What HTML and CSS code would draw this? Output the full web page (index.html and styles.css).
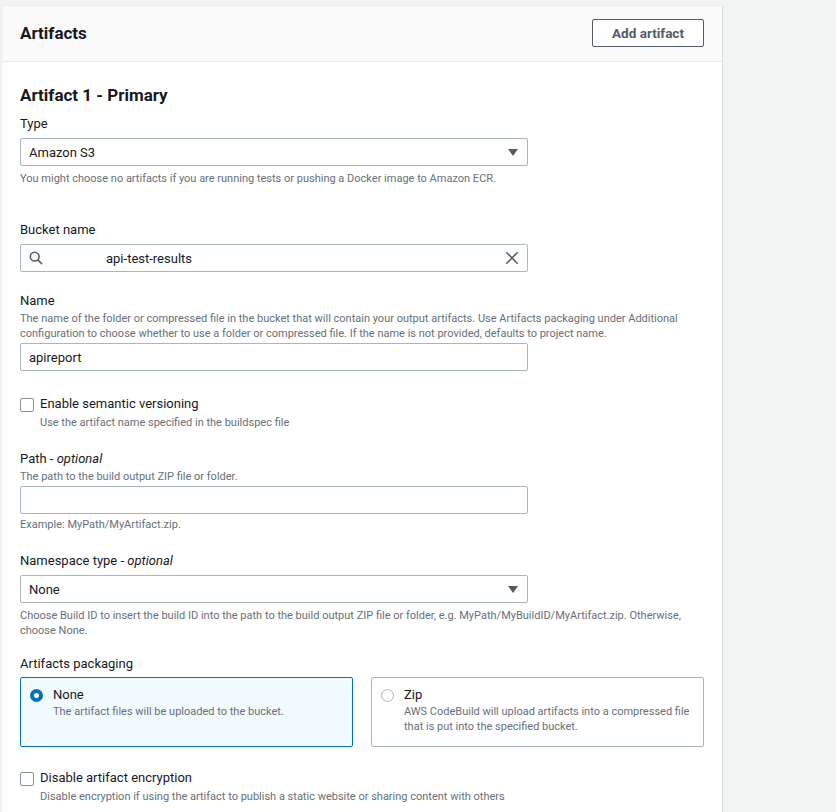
FILE: index.html
```html
<!DOCTYPE html>
<html lang="en">
<head>
  <meta charset="UTF-8" />
  <title>Artifacts</title>
  <link rel="stylesheet" href="styles.css">
</head>
<body>

  <div class="panel">
    <div class="panel-header">
      <h2>Artifacts</h2>
      <button class="btn">Add artifact</button>
    </div>

    <div class="panel-body">
      <h3>Artifact 1 - Primary</h3>

      <div class="field field-type">
        <div class="label">Type</div>
        <div class="control select">
          <span>Amazon S3</span>
          <span class="caret"></span>
        </div>
        <div class="hint">You might choose no artifacts if you are running tests or pushing a Docker image to Amazon ECR.</div>
      </div>

      <div class="field">
        <div class="label">Bucket name</div>
        <div class="control search">
          <svg class="icon" width="14" height="14" viewBox="0 0 16 16">
            <circle cx="6.5" cy="6.5" r="5" fill="none" stroke="#545b64" stroke-width="1.8"/>
            <line x1="10.2" y1="10.2" x2="14.5" y2="14.5" stroke="#545b64" stroke-width="1.8" stroke-linecap="round"/>
          </svg>
          <span class="masked"></span>
          <span class="value">api-test-results</span>
          <svg class="clear" width="14" height="14" viewBox="0 0 16 16">
            <path d="M2 2 L14 14 M14 2 L2 14" stroke="#545b64" stroke-width="1.8" stroke-linecap="round"/>
          </svg>
        </div>
      </div>

      <div class="field">
        <div class="label">Name</div>
        <div class="desc">The name of the folder or compressed file in the bucket that will contain your output artifacts. Use Artifacts packaging under Additional configuration to choose whether to use a folder or compressed file. If the name is not provided, defaults to project name.</div>
        <div class="control"><span>apireport</span></div>
      </div>

      <div class="field check">
        <span class="box"></span>
        <div>
          <div class="check-label">Enable semantic versioning</div>
          <div class="desc">Use the artifact name specified in the buildspec file</div>
        </div>
      </div>

      <div class="field field-path">
        <div class="label">Path - <i>optional</i></div>
        <div class="desc">The path to the build output ZIP file or folder.</div>
        <div class="control"></div>
        <div class="hint">Example: MyPath/MyArtifact.zip.</div>
      </div>

      <div class="field">
        <div class="label">Namespace type - <i>optional</i></div>
        <div class="control select">
          <span>None</span>
          <span class="caret"></span>
        </div>
        <div class="hint">Choose Build ID to insert the build ID into the path to the build output ZIP file or folder, e.g. MyPath/MyBuildID/MyArtifact.zip. Otherwise, choose None.</div>
      </div>

      <div class="field field-packaging">
        <div class="label">Artifacts packaging</div>
        <div class="tiles">
          <div class="tile selected">
            <span class="radio"></span>
            <div>
              <div class="tile-title">None</div>
              <div class="desc">The artifact files will be uploaded to the bucket.</div>
            </div>
          </div>
          <div class="tile">
            <span class="radio"></span>
            <div>
              <div class="tile-title">Zip</div>
              <div class="desc">AWS CodeBuild will upload artifacts into a compressed file that is put into the specified bucket.</div>
            </div>
          </div>
        </div>
      </div>

      <div class="field check check-last">
        <span class="box"></span>
        <div>
          <div class="check-label">Disable artifact encryption</div>
          <div class="desc">Disable encryption if using the artifact to publish a static website or sharing content with others</div>
        </div>
      </div>
    </div>
  </div>

</body>
</html>
```

FILE: styles.css
```css
body {
  margin: 0;
  padding: 5px 0 0 1px;
  background: #f2f3f3;
  font-family: Roboto, "Liberation Sans", sans-serif;
  color: #16191f;
  overflow: hidden;
}

.panel {
  width: 722px;
  box-sizing: border-box;
  background: #fff;
  border: 1px solid #eaeded;
  border-right-color: #d5dbdb;
  min-height: 900px;
}

.panel-header {
  display: flex;
  align-items: center;
  justify-content: space-between;
  padding: 13px 18px 14px 18px;
  background: #fafafa;
  border-bottom: 1px solid #eaeded;
}

.panel-header h2 {
  margin: 0;
  font-size: 17px;
  font-weight: 700;
}

.btn {
  width: 112px;
  height: 28px;
  background: #fff;
  border: 1px solid #545b64;
  border-radius: 2px;
  color: #545b64;
  font-family: inherit;
  font-size: 13.5px;
  font-weight: 700;
}

.panel-body {
  padding: 22px 18px 0 18px;
}

h3 {
  margin: 0;
  font-size: 17px;
  line-height: 22px;
  font-weight: 700;
}

.field {
  margin-top: 20px;
}

.field-type {
  margin-top: 9px;
  margin-bottom: 35px;
}

.field-type + .field {
  margin-top: 0;
}

.label {
  font-size: 13px;
  line-height: 18px;
}

.label i {
  font-style: italic;
}

.desc, .hint {
  font-size: 11px;
  line-height: 15px;
  color: #687078;
}

.label + .desc {
  margin-top: 1px;
}

.hint {
  margin-top: 5px;
}

.field-path .hint {
  margin-top: 3px;
}

.control {
  margin-top: 5px;
  width: 508px;
  height: 28px;
  box-sizing: border-box;
  border: 1px solid #aab7b8;
  border-radius: 2px;
  display: flex;
  align-items: center;
  padding: 0 8px;
  font-size: 13px;
}

.desc + .control {
  margin-top: 2px;
}

.select {
  justify-content: space-between;
}

.caret {
  width: 0;
  height: 0;
  border-left: 5px solid transparent;
  border-right: 5px solid transparent;
  border-top: 7px solid #545b64;
  margin-right: 1px;
}

.search .icon {
  margin-right: 8px;
}

.masked {
  display: inline-block;
  width: 55px;
}

.search .value {
  flex: 1;
}

.check {
  display: flex;
  align-items: flex-start;
  gap: 6px;
  margin-top: 24px;
}

.check .desc {
  margin-top: 2px;
}

.check-last {
  margin-top: 22px;
}

.box {
  width: 12px;
  height: 12px;
  margin: 3px 0 0 0;
  border: 1px solid #879596;
  border-radius: 2px;
  flex: none;
}

.check-label {
  font-size: 13px;
  line-height: 18px;
}

.field-packaging {
  margin-top: 17px;
}

.tiles {
  margin-top: 4px;
  display: grid;
  grid-template-columns: 1fr 1fr;
  gap: 18px;
}

.tile {
  display: flex;
  align-items: flex-start;
  gap: 10px;
  padding: 8px 9px 12px 9px;
  border: 1px solid #aab7b8;
  border-radius: 2px;
  min-height: 47px;
}

.tile.selected {
  border-color: #0073bb;
  background: #f1faff;
}

.radio {
  width: 13px;
  height: 13px;
  box-sizing: border-box;
  border: 1px solid #aab7b8;
  border-radius: 50%;
  margin-top: 3px;
  flex: none;
  background: #fff;
}

.tile.selected .radio {
  border: 4px solid #0073bb;
}

.tile-title {
  font-size: 13px;
  line-height: 18px;
}

.tile .desc {
  margin-top: 0;
}
```
